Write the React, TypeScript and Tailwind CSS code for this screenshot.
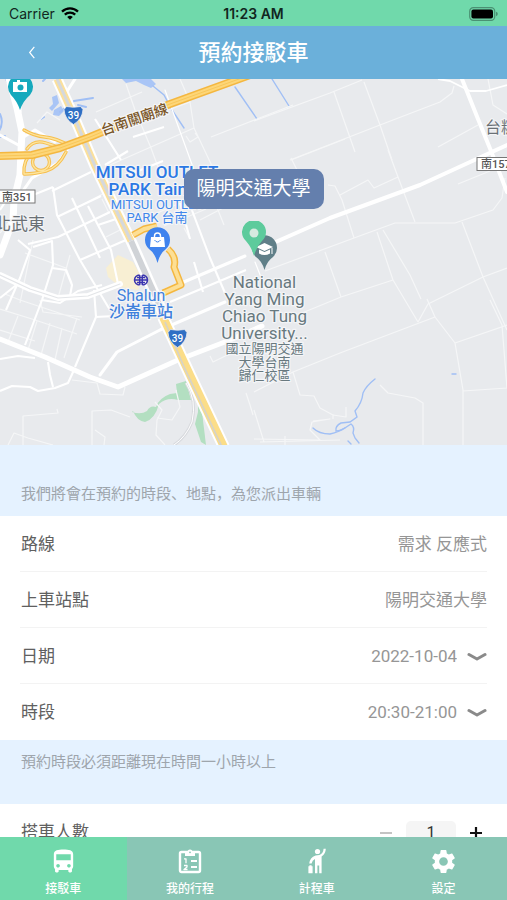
import React, { useState } from "react";
import { MdDirectionsBus, MdSettings } from "react-icons/md";

function StatusBar() {
  return (
    <div className="relative flex h-[26px] shrink-0 items-center justify-between bg-[#70d9ab] pt-px pr-2 pl-[9px] font-['Inter',sans-serif] text-sm text-[#12271f]">
      <div className="flex items-center gap-[6px]">
        <span>Carrier</span>
        <svg viewBox="0 0 18 13" className="h-[13px] w-[18px]" fill="none" stroke="#000" strokeWidth="2.3" aria-hidden="true">
          <path d="M1 4.6a11.6 11.6 0 0 1 16 0" />
          <path d="M3.8 7.7a7.5 7.5 0 0 1 10.4 0" />
          <path d="M9 12.8 6.2 10a4 4 0 0 1 5.6 0Z" fill="#000" stroke="none" />
        </svg>
      </div>
      <span className="absolute inset-x-0 text-center font-semibold">11:23 AM</span>
      <svg viewBox="0 0 30 14" className="h-[14px] w-[30px]" aria-hidden="true">
        <rect x="0.7" y="0.7" width="25" height="12.6" rx="3.6" fill="none" stroke="#4b9173" strokeWidth="1.2" />
        <rect x="2.4" y="2.4" width="21.6" height="9.2" rx="2" fill="#000" />
        <path d="M27 4.8v4.4q1.8-.6 1.8-2.2T27 4.8Z" fill="#4b9173" />
      </svg>
    </div>
  );
}

function RouteShield({ x, y }: { x: number; y: number }) {
  return (
    <g transform={`translate(${x} ${y})`}>
      <path d="M-7-8.5Q0-7 7-8.5L9.5-5.5Q9 4 0 9.5-9 4-9.5-5.5Z" fill="#2f6fc4" stroke="#e8eaed" strokeWidth="0.8" />
      <text y="3.5" textAnchor="middle" fill="#fff" fontSize="10" fontWeight="500">39</text>
    </g>
  );
}

function MapDrawing() {
  return (
    <svg
      viewBox="0 79 507 366"
      preserveAspectRatio="xMidYMid slice"
      className="block h-full w-full font-['Roboto','Noto_Sans_CJK_TC',sans-serif]"
      role="img"
      aria-label="地圖"
    >
      <rect x="-300" y="79" width="1200" height="366" fill="#e8eaed" />
      {/* station area and parks */}
      <path d="M106 268 118 255 133 262 142 278 138 290 120 287 108 277Z" fill="#f8efd3" />
      <g fill="#b3dfc1">
        <path d="M132 412q9 3 15-1 3-6 9-4 3-9 14-13l7-1-1-9 10-3 5 19-13 0q-11-3-19 4-4 15-14 18-8-1-12-11Z" />
        <path d="M198 412 202 412 206 445 201 442 195 424Z" />
        <path d="M198 402 201 412 198 412Z" />
      </g>

      {/* water */}
      <g fill="#a9c5f6">
        <path d="M122 79h29l5 5-5 4-7-3-8-4-10 2Z" />
        <path d="M52 97l5-2 2 8-7 8-3-3 4-4Z" />
        <path d="M54 110l7-4 3 5-5 5-6-1Z" />
      </g>
      <g fill="none" stroke="#a0bff5" strokeWidth="1.4" strokeLinecap="round">
        <path d="M153 86 164 95 172 110 184 128M235 87 257 119M272 79 289 106" />
        <path d="M60 112 74 101 93 98M78 105 86 107M41 119 44 117M0 114q4 9-1 17M0 137 5 136M6 79 9 85M43 81 45 79" strokeWidth="2" />
        <path d="M375 379q-9 7-12 14-1 10-8 18l2 6-7 5-9 1q-6 3-5 8 5 0 15-7 4 3 2 9l2 5 4 5" />
        <path d="M313 428q6 6 17 6 9-2 15-6M348 441l3 3M452 374h4" />
      </g>

      {/* thin streets */}
      <g fill="none" stroke="#f5f6f7" strokeWidth="1.2" strokeLinejoin="round">
        <path d="M126 84 135 110 151 148 162 178M96 112 142 92M180 79 190 102 194 128 212 166M186 136 190 142 198 137 195 133M110 165 194 128" />
        <path d="M254 121 330 93 362 80M334 92 355 152M364 82 380 125 392 160M290 160 380 125 440 102 452 93 454 86M438 147 478 125" />
        <path d="M211 137 293 105M200 220 223 208M212 195 224 225M291 158 302 180 307 205M291 160 345 139M388 150 398 177 415 222M340 195 368 180 374 188 398 177M328 185 335 186 342 200 354 238M458 184 490 171" />
        <path d="M265 271 354 238 395 223 455 223 493 210 502 198 505 178M462 222 483 277 507 330M325 252 341 297M285 320 341 297 393 280M377 232 393 280 418 322M383 230 410 275 421 299M418 322 428 304 483 277 507 268" />
        <path d="M293 372 340 353 435 317 427 299M435 317 455 343 463 390 463 445M455 343 507 325M490 300 502 325 507 388M463 391 507 388M254 392 293 372 300 395 314 396 320 408 333 415 333 419M380 385 388 393 415 398 423 403 423 445" />
        <path d="M254 410 264 442M333 415 346 417 346 407M313 421 330 419 312 422 310 430 320 440 254 439M210 356 213 362 254 342M246 393 250 405 253 415M285 436V445M260 442 340 440" />
        <path d="M23 445V416L58 413 57 409M8 445 14 433 28 438 53 445M92 445V411L111 410 130 417M72 380 97 383 100 394 123 395 125 387M95 430 105 437 104 445M155 402 162 410 157 420 156 435 165 445M176 390 180 407 172 420 157 418" />
        <path d="M180 220 206 209M155 214 180 203M164 226 190 213M184 228 190 239M82 205 112 189M89 222 109 213 102 199M106 237 124 228M163 112 190 102M60 120 47 112 37 123M0 233 14 216M488 79 493 105 507 114" />
        <path d="M33 240 20 303M58 298 70 255M0 309 32 319 77 334M5 294 20 300 80 320M0 330 35 341M18 316 8 342M37 321 28 350M50 323 41 355M62 328 55 360M77 318 64 358M25 253 66 268 72 283M40 300 43 312 82 317M16 282 24 289" />
      </g>

      {/* railway */}
      <path d="M186 383q11 17 6 39-6 15-18 23" fill="none" stroke="#d8dade" strokeWidth="3" />
      <path d="M186 383q11 17 6 39-6 15-18 23" fill="none" stroke="#fff" strokeWidth="1" />

      {/* local streets */}
      <g fill="none" stroke="#fff" strokeWidth="2.1" strokeLinejoin="round">
        <path d="M53 187 57 215 80 260 110 310M52 191 91 172M57 217 101 196M28 244 58 237 110 212M80 260 126 240M72 198 86 228 100 258M88 206 111 250 118 284M98 225 116 219M33 247 52 241 53 265 42 300 25 345M18 240 30 250 20 278 6 310" />
        <path d="M128 175 163 161M121 160 95 119M133 137 164 127M105 165 128 151M52 268 66 270 72 285 70 296M0 210 13 190 33 195 53 187" />
        <path d="M42 300 60 303 78 291 102 285M0 359 18 356 35 358M48 362 50 375 53 387M0 391 12 386 30 387 38 391 55 388 68 383 74 370M75 367 96 317 94 290M95 317 115 316M0 298 20 282" />
        <path d="M190 205 210 258 225 293M194 262 203 292M180 203 190 239M170 302 246 270" />
        <path d="M507 85 486 91 470 91 450 81 438 79" strokeWidth="1.8" />
      </g>
      <g fill="none" stroke="#fff" strokeLinejoin="round" strokeLinecap="round">
        <path d="M0 275 30 289 58 298 88 296 120 284" strokeWidth="6" />
        <path d="M0 275 30 289 58 298 88 296 120 284" stroke="#e3e5e8" strokeWidth="1.2" />
        <path d="M100 375 117 352 160 330 225 302M165 290 245 256" strokeWidth="3" />
        <path d="M0 339 45 357 90 377 118 387 178 360 230 340 262 326" strokeWidth="5" />
        <path d="M262 248 330 218 420 185 507 145M462 79 476 114 491 151 507 192" strokeWidth="4" />
        <path d="M8 75 17 108 22 132 21 151 20 175 14 200 13 220 0 255" strokeWidth="7" />
        <path d="M28 75 20 98 20 112M75 79 66 93M22 138 35 130 55 142M13 205 32 178 58 163 67 150M0 135 22 147" strokeWidth="3" />
        <path d="M165 90 194 170M255 262 266 290" strokeWidth="1.2" />
      </g>

      {/* highways */}
      <g fill="none" strokeLinejoin="round">
        <path d="M57 79 75 119 95 166 131 241" stroke="#fff" strokeWidth="11" />
        <path d="M57 79 75 119 95 166 131 241" stroke="#fbe09c" strokeWidth="7" />
        <path d="M57 79 75 119 95 166 131 241 163 313" stroke="#d5d8dc" strokeWidth="3" />
        <path d="M131 241 163 313" stroke="#fff" strokeWidth="11" />
        <path d="M131 241 163 313" stroke="#d0d3d7" strokeWidth="6" />
        <path d="M163 317 190 375 224 447" stroke="#fff" strokeWidth="12" />
        <path d="M163 317 190 375 224 447" stroke="#fbdd88" strokeWidth="8" />
        <path d="M165 322 184 367 222 447" stroke="#d8d3c5" strokeWidth="1.8" />
        <g stroke="#f6bf4e" strokeWidth="3.4" strokeLinecap="round">
          <path d="M24 130Q34 136 45 137T70 146M24 174Q23 160 32 153M27 149Q34 139 46 143T58 147M66 152Q58 168 46 171T25 174" />
          <circle cx="41" cy="162" r="8.5" />
        </g>
        <g stroke="#fde49e" strokeWidth="1.4" strokeLinecap="round">
          <path d="M24 130Q34 136 45 137T70 146M24 174Q23 160 32 153M27 149Q34 139 46 143T58 147M66 152Q58 168 46 171T25 174" />
          <circle cx="41" cy="162" r="8.5" />
        </g>
        <path d="M-300 156H0L32 155 60 148 90 137 170 104 250 75" stroke="#f4b740" strokeWidth="8" />
        <path d="M-300 156H0L32 155 60 148 90 137 170 104 250 75" stroke="#fdd678" strokeWidth="5" />
        <path d="M0 156 32 155 60 148 90 137 170 104 250 75" stroke="#f8c75a" strokeWidth="1" />
        <path d="M133 235 144 229 157 226M168 249Q177 257 174 267L181 285 163 293" stroke="#f4b740" strokeWidth="7" />
        <path d="M133 235 144 229 157 226M168 249Q177 257 174 267L181 285 163 293" stroke="#fddf94" strokeWidth="4" />
      </g>

      <RouteShield x={73.5} y={115} />
      <RouteShield x={177.5} y={338} />

      {/* attraction pin */}
      <path d="M20 110Q17 101 11 95a12.500 12.500 0 1 1 19 0q-7 6-10 15Z" fill="#16a9bd" />
      <path d="M13 82h4v-2h3v2h7v10H13Z" fill="#fff" />
      <circle cx="20.500" cy="87.500" r="3" fill="#16a9bd" />

      {/* shopping pin */}
      <path d="M157.500 263Q155 253 149 249a12.500 12.500 0 1 1 17 0q-6 4-8.500 14Z" fill="#3f83ee" />
      <path d="M151 237h13l1 10h-15Z" fill="#fff" />
      <path d="M154.500 238v-2a3 3 0 0 1 6 0v2" fill="none" stroke="#fff" strokeWidth="1.4" />
      <path d="M154.500 240q3 4 6 0" fill="none" stroke="#3f83ee" strokeWidth="1" />

      {/* rail emblem */}
      <g fill="none" stroke="#3a35b0" strokeWidth="1.5">
        <path d="M139.500 275a5 5 0 1 0 0 10M142.500 275a5 5 0 1 1 0 10M139.700 275v10M142.300 275v10M135 280h12M137 277.500h8M137 282.500h8" />
      </g>

      {/* university pin */}
      <path d="M264.500 270Q262 261 256 257a12.500 12.500 0 1 1 17 0q-6 4-8.500 13Z" fill="#607f88" />
      <path d="M256 247 264.500 243 273 247 264.500 251Z" fill="#fff" />
      <path d="M259 249.500v4q5.500 3 11 0v-4l-5.500 2.500ZM271.500 248h1v6h-1Z" fill="#fff" />

      <g textAnchor="middle" stroke="#f4f5f7" strokeWidth="2.500" strokeLinejoin="round" paintOrder="stroke">
        <g fill="#2b78e4">
          <g fontSize="17" fontWeight="500">
            <text x="157" y="178">MITSUI OUTLET</text>
            <text x="157" y="195">PARK Tainan</text>
          </g>
          <g fontSize="13" fill="#4187ea">
            <text x="157" y="209">MITSUI OUTLET</text>
            <text x="157" y="222">PARK 台南</text>
          </g>
          <text x="141" y="301" fontSize="16" fill="#3f80dc">Shalun</text>
          <text x="141" y="317" fontSize="16" fontWeight="500" fill="#3f80dc">沙崙車站</text>
        </g>
        <g fill="#68797f">
          <g fontSize="17">
            <text x="264.500" y="288">National</text>
            <text x="264.500" y="305">Yang Ming</text>
            <text x="264.500" y="322">Chiao Tung</text>
            <text x="264.500" y="339">University...</text>
          </g>
          <g fontSize="13">
            <text x="264.500" y="353">國立陽明交通</text>
            <text x="264.500" y="367">大學台南</text>
            <text x="264.500" y="380">歸仁校區</text>
          </g>
        </g>
        <text transform="translate(136 124) rotate(-19)" fontSize="14" fontWeight="500" fill="#7a5526">台南關廟線</text>
      </g>
      <g stroke="#f4f5f7" strokeWidth="2" paintOrder="stroke" fill="#6a7075">
        <text x="-6" y="230" fontSize="17">北武東</text>
        <text x="485" y="133" fontSize="16">台糖</text>
      </g>
      <rect x="-6" y="190" width="41" height="13" fill="#fff" stroke="#777" />
      <text x="2" y="201" fontSize="11" fontWeight="500" fill="#555">南351</text>
      <rect x="477" y="157.500" width="41" height="13" fill="#fff" stroke="#777" />
      <text x="481" y="168" fontSize="11" fontWeight="500" fill="#555">南157</text>
    </svg>
  );
}

function StopMap() {
  return (
    <section className="relative h-[366px] shrink-0 overflow-hidden">
      <MapDrawing />
      <div className="absolute top-[90px] left-1/2 flex -translate-x-1/2 flex-col items-center gap-3">
        <div className="flex h-10 items-center rounded-[10px] bg-[#647fad] px-[13px] text-[19px] whitespace-nowrap text-white">陽明交通大學</div>
        <svg viewBox="0 0 24 35" className="h-[35px] w-6" aria-hidden="true">
          <path d="M12 35Q10 27 4 20A12 12 0 1 1 20 20Q14 27 12 35Z" fill="#5dcb9c" />
          <circle cx="12" cy="12" r="4.500" fill="#d6eadf" />
        </svg>
      </div>
    </section>
  );
}

function Chevron() {
  return (
    <svg viewBox="0 0 20 10" className="pointer-events-none h-[10px] w-5" fill="none" stroke="#8a8a8a" strokeWidth="3" strokeLinecap="round" strokeLinejoin="round" aria-hidden="true">
      <path d="M2 2.500 10 7 18 2.500" />
    </svg>
  );
}

const rowClass = "mx-5 flex h-14 items-center justify-between border-b border-[#f3f3f3] pt-[2px] pl-px text-[17px] last:border-b-0";
const hintClass = "shrink-0 bg-[#e5f2ff] px-[21px] font-['Noto_Sans_CJK_JP',sans-serif] text-[15px] text-[#9ea5ac]";

function SelectRow({ id, label, options }: { id: string; label: string; options: string[] }) {
  return (
    <div className={rowClass}>
      <label htmlFor={id} className="text-[#606060]">{label}</label>
      <div className="flex items-center gap-[10px]">
        <select id={id} className="appearance-none bg-transparent text-right text-[#969696] outline-none [text-align-last:right]">
          {options.map((o) => (
            <option key={o}>{o}</option>
          ))}
        </select>
        <Chevron />
      </div>
    </div>
  );
}

function ClipboardIcon() {
  return (
    <svg viewBox="0 0 24 26" className="h-[26px] w-6" fill="none" stroke="currentColor" strokeWidth="2.400" strokeLinejoin="round" aria-hidden="true">
      <rect x="2" y="4" width="20" height="20" rx="1.500" />
      <path d="M7 5h10v3H7ZM9.500 4a2.500 2.500 0 0 1 5 0v2h-5Z" fill="currentColor" stroke="none" />
      <circle cx="12" cy="4.300" r="0.900" fill="#89c6b5" stroke="none" />
      <path d="M13 13h6M13 19h6" strokeWidth="2" />
      <path d="M6 10.800h2v4.400M6 17.500h3v1.500l-3 2.500h3.500" strokeWidth="1.300" />
    </svg>
  );
}

function HailIcon() {
  return (
    <svg viewBox="0 0 20 26" className="h-[26px] w-5" fill="currentColor" aria-hidden="true">
      <circle cx="10.500" cy="3.500" r="2.600" />
      <path d="M18.800.8Q18.600 6.200 14.600 8.400V25.200H12.200V17.600H10.400V25.200H8V11Q5.200 12.200 4.600 15.600H2.200Q2.800 9.400 8.600 7.400L12.400 6.900Q16.200 5.800 16.600.8Z" />
      <path d="M2.400 17.200H4.600V18.200H5.600V25.200H1.400V18.200H2.400Z" />
    </svg>
  );
}

const tabs = [
  { label: "接駁車", icon: <MdDirectionsBus className="size-[29px]" /> },
  { label: "我的行程", icon: <ClipboardIcon /> },
  { label: "計程車", icon: <HailIcon /> },
  { label: "設定", icon: <MdSettings className="size-[29px]" /> },
];

export default function App() {
  const [count, setCount] = useState(1);
  const [active, setActive] = useState(0);
  return (
    <div className="flex h-screen flex-col bg-white font-['Roboto','Noto_Sans_CJK_TC',sans-serif]">
      <StatusBar />
      <header className="relative flex h-[53px] shrink-0 items-center justify-center bg-[#6bb0da] text-white">
        <button type="button" aria-label="返回" className="absolute left-5 flex size-6 items-center justify-center">
          <svg viewBox="0 0 8 14" className="h-[13px] w-2" fill="none" stroke="currentColor" strokeWidth="1.300" aria-hidden="true">
            <path d="M6.500 1 1.500 7l5 6" />
          </svg>
        </button>
        <h1 className="text-[22px] font-medium">預約接駁車</h1>
      </header>

      <main className="flex min-h-0 flex-1 flex-col overflow-y-auto [scrollbar-width:none]">
        <StopMap />
        <p className={`${hintClass} flex h-[71px] items-end pb-3`}>我們將會在預約的時段、地點，為您派出車輛</p>
        <section className="shrink-0">
          <div className={rowClass}>
            <span className="text-[#606060]">路線</span>
            <span className="text-[#969696]">需求 反應式</span>
          </div>
          <div className={rowClass}>
            <span className="text-[#606060]">上車站點</span>
            <span className="text-[#969696]">陽明交通大學</span>
          </div>
          <SelectRow id="date" label="日期" options={["2022-10-04"]} />
          <SelectRow id="time" label="時段" options={["20:30-21:00"]} />
        </section>
        <p className={`${hintClass} h-16 pt-[10px]`}>預約時段必須距離現在時間一小時以上</p>
        <div className="flex h-14 shrink-0 items-center justify-between px-[21px] pt-[2px] text-[17px]">
          <label htmlFor="passengers" className="text-[#606060]">搭車人數</label>
          <div className="flex items-center gap-3 pr-[2px]">
            <button type="button" aria-label="減少" onClick={() => setCount(Math.max(1, count - 1))} className="flex size-4 items-center justify-center">
              <span className="h-[2px] w-3 bg-[#c4c4c4]" />
            </button>
            <input
              id="passengers"
              inputMode="numeric"
              value={count}
              onChange={(e) => setCount(Number(e.target.value) || 1)}
              className="h-6 w-[50px] rounded-[5px] bg-[#f5f5f5] text-center text-base text-[#333] outline-none"
            />
            <button type="button" aria-label="增加" onClick={() => setCount(count + 1)} className="flex size-4 items-center justify-center">
              <svg viewBox="0 0 12 12" className="size-3" stroke="#111" strokeWidth="2.200" aria-hidden="true">
                <path d="M6 0v12M0 6h12" />
              </svg>
            </button>
          </div>
        </div>
      </main>

      <nav className="grid h-[63px] shrink-0 grid-cols-4 bg-[#89c6b5] text-white">
        {tabs.map((tab, i) => (
          <button
            key={tab.label}
            type="button"
            onClick={() => setActive(i)}
            className={i === active ? "flex flex-col items-center gap-[2px] bg-[#70d9ab] pt-2" : "flex flex-col items-center gap-[2px] pt-2"}
          >
            <span className="flex h-8 items-center">{tab.icon}</span>
            <span className="text-xs leading-5 font-medium">{tab.label}</span>
          </button>
        ))}
      </nav>
    </div>
  );
}
